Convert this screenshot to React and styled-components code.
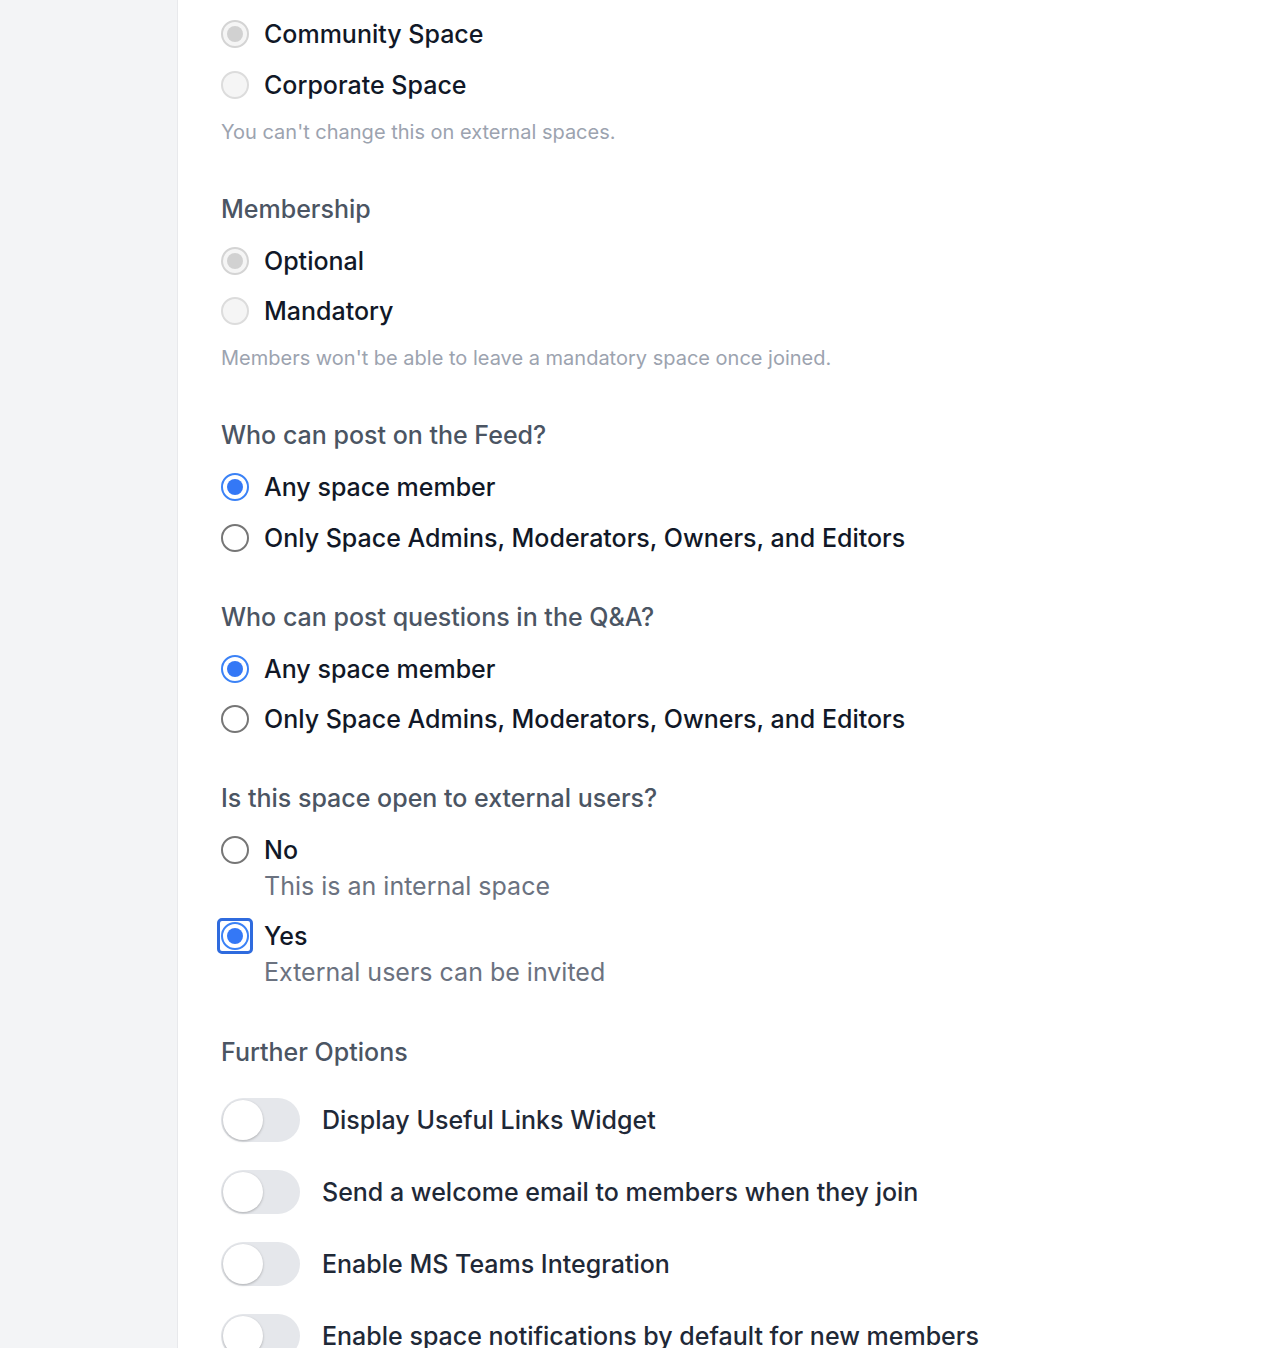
import React from "react"
import styled, { createGlobalStyle, css } from "styled-components"

const GlobalStyle = createGlobalStyle`
  html, body {
    margin: 0;
    padding: 0;
    background: #ffffff;
    font-family: Inter, "Noto Sans", "Liberation Sans", sans-serif;
    -webkit-font-smoothing: antialiased;
  }
  * { box-sizing: border-box; }
`

const spaceTypes = [
  { label: "Community Space", checked: true },
  { label: "Corporate Space", checked: false },
]

const membership = [
  { label: "Optional", checked: true },
  { label: "Mandatory", checked: false },
]

const posters = [
  { label: "Any space member", checked: true },
  { label: "Only Space Admins, Moderators, Owners, and Editors", checked: false },
]

const toggles = [
  "Display Useful Links Widget",
  "Send a welcome email to members when they join",
  "Enable MS Teams Integration",
  "Enable space notifications by default for new members",
]

export default function App() {
  return (
    <>
      <GlobalStyle />
      <Page>
        <Sidebar />
        <Main>
          <Section>
            <Options>
              {spaceTypes.map(o => (
                <RadioRow key={o.label}>
                  <Radio checked={o.checked} disabled />
                  <Label>{o.label}</Label>
                </RadioRow>
              ))}
            </Options>
            <Helper>You can't change this on external spaces.</Helper>
          </Section>

          <Section>
            <Group>
              <Heading>Membership</Heading>
              <Options>
                {membership.map(o => (
                  <RadioRow key={o.label}>
                    <Radio checked={o.checked} disabled />
                    <Label>{o.label}</Label>
                  </RadioRow>
                ))}
              </Options>
            </Group>
            <Helper>Members won't be able to leave a mandatory space once joined.</Helper>
          </Section>

          <Section>
            <Group>
              <Heading>Who can post on the Feed?</Heading>
              <Options>
                {posters.map(o => (
                  <RadioRow key={o.label}>
                    <Radio checked={o.checked} />
                    <Label>{o.label}</Label>
                  </RadioRow>
                ))}
              </Options>
            </Group>
          </Section>

          <Section>
            <Group>
              <Heading>Who can post questions in the Q&amp;A?</Heading>
              <Options>
                {posters.map(o => (
                  <RadioRow key={o.label}>
                    <Radio checked={o.checked} />
                    <Label>{o.label}</Label>
                  </RadioRow>
                ))}
              </Options>
            </Group>
          </Section>

          <Section>
            <Group>
              <Heading>Is this space open to external users?</Heading>
              <Options $gap={19}>
                <RadioRow>
                  <Radio />
                  <LabelStack>
                    <Label>No</Label>
                    <Description>This is an internal space</Description>
                  </LabelStack>
                </RadioRow>
                <RadioRow>
                  <Radio checked focused />
                  <LabelStack>
                    <Label>Yes</Label>
                    <Description>External users can be invited</Description>
                  </LabelStack>
                </RadioRow>
              </Options>
            </Group>
          </Section>

          <Section>
            <Heading>Further Options</Heading>
            <ToggleList>
              {toggles.map(t => (
                <ToggleRow key={t}>
                  <Switch>
                    <Knob />
                  </Switch>
                  <ToggleLabel>{t}</ToggleLabel>
                </ToggleRow>
              ))}
            </ToggleList>
          </Section>
        </Main>
      </Page>
    </>
  )
}

const Page = styled.div`
  display: flex;
  min-height: 100vh;
`

const Sidebar = styled.aside`
  width: 178px;
  flex-shrink: 0;
  background: #f3f4f6;
  border-right: 1px solid #e8e9ec;
`

const Main = styled.main`
  flex: 1;
  padding: 19px 0 0 43px;
`

const Section = styled.section`
  & + & {
    margin-top: 48px;
  }
`

const Group = styled.div`
  display: flex;
  flex-direction: column;
  gap: 21px;
`

const Options = styled.div`
  display: flex;
  flex-direction: column;
  gap: ${p => p.$gap ?? 20.5}px;
`

const Heading = styled.h3`
  margin: 0;
  font-size: 25px;
  line-height: 32px;
  font-weight: 500;
  color: #4b5563;
`

const RadioRow = styled.label`
  display: flex;
  align-items: flex-start;
  gap: 15px;
`

const Radio = styled.span`
  position: relative;
  width: 28px;
  height: 28px;
  margin-top: 1px;
  flex-shrink: 0;
  border-radius: 50%;
  border: 2px solid #767676;
  background: #ffffff;
  display: flex;
  align-items: center;
  justify-content: center;

  &::before {
    content: "";
    width: 16px;
    height: 16px;
    border-radius: 50%;
    background: transparent;
  }

  ${p => p.checked && css`
    border-color: #3b82f6;
    &::before { background: #3478f6; }
  `}

  ${p => p.disabled && css`
    border-color: #dcdcdc;
    background: #f5f5f5;
  `}

  ${p => p.disabled && p.checked && css`
    border-color: #d4d4d4;
    &::before { background: #d1d1d1; }
  `}

  ${p => p.focused && css`
    &::after {
      content: "";
      position: absolute;
      inset: -6px;
      border: 3px solid #2f6bde;
      border-radius: 5px;
    }
  `}
`

const LabelStack = styled.div`
  display: flex;
  flex-direction: column;
  gap: 5px;
`

const Label = styled.span`
  font-size: 25px;
  line-height: 30px;
  font-weight: 500;
  color: #111827;
`

const Description = styled.span`
  font-size: 25px;
  line-height: 32px;
  font-weight: 400;
  color: #6b7280;
`

const Helper = styled.p`
  margin: 19px 0 0;
  font-size: 20px;
  line-height: 26px;
  color: #9ca3af;
`

const ToggleList = styled.div`
  display: flex;
  flex-direction: column;
  gap: 28px;
  margin-top: 30px;
`

const ToggleRow = styled.div`
  display: flex;
  align-items: center;
  gap: 22px;
`

const Switch = styled.span`
  width: 79px;
  height: 44px;
  flex-shrink: 0;
  border-radius: 22px;
  background: #e5e7eb;
  display: flex;
  align-items: center;
  padding: 2px;
`

const Knob = styled.span`
  width: 40px;
  height: 40px;
  border-radius: 50%;
  background: #ffffff;
  box-shadow: 0 1px 3px rgba(0, 0, 0, 0.18), 0 1px 2px rgba(0, 0, 0, 0.08);
`

const ToggleLabel = styled.span`
  font-size: 25px;
  line-height: 30px;
  font-weight: 500;
  color: #1f2937;
`
